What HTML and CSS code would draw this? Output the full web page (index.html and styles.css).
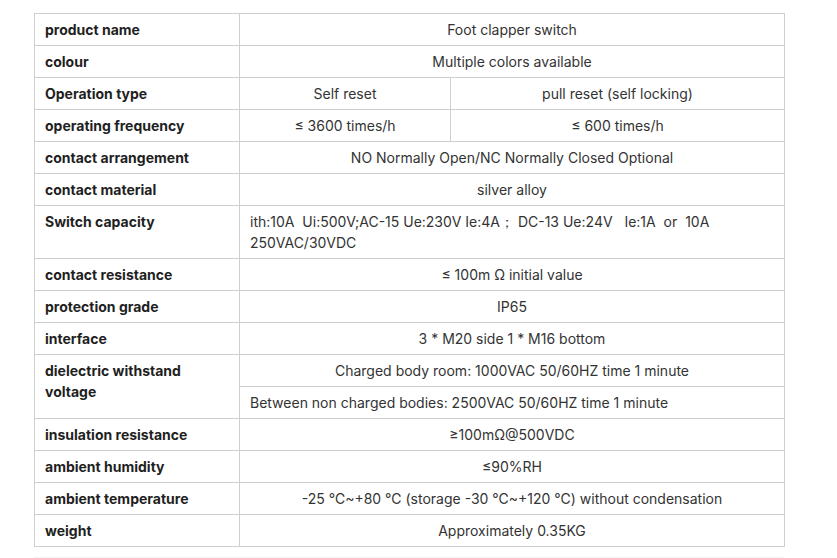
FILE: index.html
```html
<!DOCTYPE html>
<html>
<head>
<meta charset="utf-8">
<link rel="stylesheet" href="styles.css">
</head>
<body>
<div class="wrap">
<table class="spec">
<colgroup><col class="c1"><col class="c2"><col class="c3"></colgroup>
<tbody>
<tr><th>product name</th><td colspan="2">Foot clapper switch</td></tr>
<tr><th>colour</th><td colspan="2">Multiple colors available</td></tr>
<tr><th>Operation type</th><td>Self reset</td><td>pull reset (self locking)</td></tr>
<tr><th>operating frequency</th><td>≤ 3600 times/h</td><td>≤ 600 times/h</td></tr>
<tr><th>contact arrangement</th><td colspan="2">NO Normally Open/NC Normally Closed Optional</td></tr>
<tr><th>contact material</th><td colspan="2">silver alloy</td></tr>
<tr><th>Switch capacity</th><td colspan="2" class="left">ith:10A&nbsp; Ui:500V;AC-15 Ue:230V Ie:4A；&nbsp;DC-13 Ue:24V&nbsp;&nbsp; Ie:1A&nbsp; or&nbsp; 10A 250VAC/30VDC</td></tr>
<tr><th>contact resistance</th><td colspan="2">≤ 100m Ω initial value</td></tr>
<tr><th>protection grade</th><td colspan="2">IP65</td></tr>
<tr><th>interface</th><td colspan="2">3 * M20 side 1 * M16 bottom</td></tr>
<tr><th rowspan="2">dielectric withstand voltage</th><td colspan="2">Charged body room: 1000VAC 50/60HZ time 1 minute</td></tr>
<tr><td colspan="2" class="left">Between non charged bodies: 2500VAC 50/60HZ time 1 minute</td></tr>
<tr><th>insulation resistance</th><td colspan="2">≥100mΩ@500VDC</td></tr>
<tr><th>ambient humidity</th><td colspan="2">≤90%RH</td></tr>
<tr><th>ambient temperature</th><td colspan="2">-25 ℃~+80 ℃ (storage -30 ℃~+120 ℃) without condensation</td></tr>
<tr><th>weight</th><td colspan="2">Approximately 0.35KG</td></tr>
</tbody>
</table>
<div class="rule"></div>
</div>
</body>
</html>
```
FILE: styles.css
```css
html, body {
  margin: 0;
  padding: 0;
  background: #fff;
}
body {
  font-family: Inter, "Noto Sans", sans-serif;
  font-size: 14px;
  color: #333;
}
.wrap {
  padding: 13px 0 0 34px;
}
.spec {
  border-collapse: collapse;
  table-layout: fixed;
  width: 750px;
}
.c1 { width: 205px; }
.c2 { width: 211px; }
.c3 { width: 334px; }
.spec th, .spec td {
  border: 1px solid #cfcfcf;
  padding: 5px 10px;
  line-height: 21px;
  vertical-align: top;
}
.spec th {
  text-align: left;
  font-weight: 700;
  color: #1f1f1f;
}
.spec td {
  text-align: center;
  font-weight: 400;
  color: #333;
}
.spec td.left {
  text-align: left;
}
.rule {
  margin-top: 10px;
  width: 750px;
  height: 2px;
  background: #f4f4f4;
}
```
